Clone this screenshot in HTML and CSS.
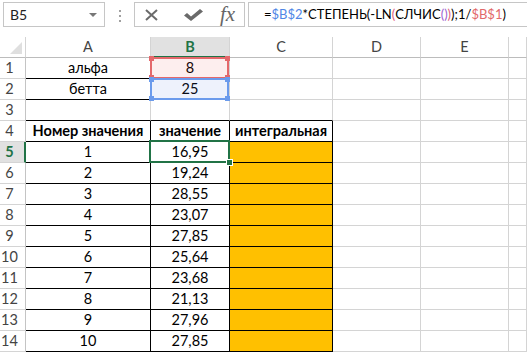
FILE: index.html
```html
<!DOCTYPE html>
<html lang="ru">
<head>
    <meta charset="UTF-8">
    <title>Книга1 - Excel</title>
    <link rel="stylesheet" href="styles.css">
</head>
<body>
    <div class="formula-bar">
        <div class="name-box"><span>B5</span><span class="arrow"></span></div>
        <div class="grip"><i></i><i></i><i></i></div>
        <div class="fx-buttons">
            <svg class="ico-cancel" width="13" height="12" viewBox="0 0 13 12">
                <path d="M1 1 L12 11 M12 1 L1 11" stroke="#6a6a6a" stroke-width="2" fill="none"/>
            </svg>
            <svg class="ico-enter" width="20" height="12" viewBox="0 0 20 12">
                <path d="M0 6.5 L3 4 L7 7.5 L16 0 L19 2.5 L7 12 Z" fill="#6a6a6a"/>
            </svg>
            <span class="fx">fx</span>
        </div>
        <div class="formula">=<span class="ref-b">$B$2</span>*СТЕПЕНЬ(-LN<span class="p1">(</span>СЛЧИС<span class="p2">()</span><span class="p1">)</span>);1/<span class="ref-r">$B$1</span>)</div>
    </div>

    <div class="sheet">
        <!-- column headers -->
        <div class="h corner"><span class="tri"></span></div>
        <div class="h">A</div>
        <div class="h h-sel">B</div>
        <div class="h">C</div>
        <div class="h">D</div>
        <div class="h">E</div>
        <div class="h"></div>

        <div class="r">1</div>
        <div class="c bb">альфа</div>
        <div class="c ref">8<span class="ref-box red"><i class="tl"></i><i class="tr"></i><i class="bl"></i><i class="br-h"></i></span></div>
        <div class="c"></div><div class="c"></div><div class="c"></div><div class="c"></div>

        <div class="r">2</div>
        <div class="c bb">бетта</div>
        <div class="c ref">25<span class="ref-box blue"><i class="tl"></i><i class="tr"></i><i class="bl"></i><i class="br-h"></i></span></div>
        <div class="c"></div><div class="c"></div><div class="c"></div><div class="c"></div>

        <div class="r">3</div>
        <div class="c bb"></div><div class="c bb"></div><div class="c bb"></div>
        <div class="c"></div><div class="c"></div><div class="c"></div>

        <div class="r">4</div>
        <div class="c t bold">Номер значения</div>
        <div class="c t bold">значение</div>
        <div class="c t bold">интегральная</div>
        <div class="c"></div><div class="c"></div><div class="c"></div>

        <div class="r r-sel">5</div>
        <div class="c t">1</div>
        <div class="c t sel">16,95<span class="sel-box"><i></i></span></div>
        <div class="c t fill"></div>
        <div class="c"></div><div class="c"></div><div class="c"></div>

        <div class="r">6</div>
        <div class="c t">2</div><div class="c t">19,24</div><div class="c t fill"></div>
        <div class="c"></div><div class="c"></div><div class="c"></div>

        <div class="r">7</div>
        <div class="c t">3</div><div class="c t">28,55</div><div class="c t fill"></div>
        <div class="c"></div><div class="c"></div><div class="c"></div>

        <div class="r">8</div>
        <div class="c t">4</div><div class="c t">23,07</div><div class="c t fill"></div>
        <div class="c"></div><div class="c"></div><div class="c"></div>

        <div class="r">9</div>
        <div class="c t">5</div><div class="c t">27,85</div><div class="c t fill"></div>
        <div class="c"></div><div class="c"></div><div class="c"></div>

        <div class="r">10</div>
        <div class="c t">6</div><div class="c t">25,64</div><div class="c t fill"></div>
        <div class="c"></div><div class="c"></div><div class="c"></div>

        <div class="r">11</div>
        <div class="c t">7</div><div class="c t">23,68</div><div class="c t fill"></div>
        <div class="c"></div><div class="c"></div><div class="c"></div>

        <div class="r">12</div>
        <div class="c t">8</div><div class="c t">21,13</div><div class="c t fill"></div>
        <div class="c"></div><div class="c"></div><div class="c"></div>

        <div class="r">13</div>
        <div class="c t">9</div><div class="c t">27,96</div><div class="c t fill"></div>
        <div class="c"></div><div class="c"></div><div class="c"></div>

        <div class="r">14</div>
        <div class="c t">10</div><div class="c t">27,85</div><div class="c t fill"></div>
        <div class="c"></div><div class="c"></div><div class="c"></div>
    </div>
</body>
</html>
```

FILE: styles.css
```css
* {
    margin: 0;
    padding: 0;
    box-sizing: border-box;
}

body {
    font-family: Lato, 'Open Sans', sans-serif;
    background-color: #fff;
    color: #000;
    width: 527px;
    height: 352px;
    overflow: hidden;
}

/* formula bar */

.formula-bar {
    display: flex;
    align-items: flex-start;
    height: 37px;
    padding: 2px 0 0 3px;
}

.name-box {
    width: 102px;
    height: 25px;
    border: 1px solid #c6c6c6;
    display: flex;
    align-items: center;
    justify-content: space-between;
    padding: 0 7px 0 6px;
    font-size: 14px;
    color: #222;
}

.name-box .arrow {
    border-left: 4px solid transparent;
    border-right: 4px solid transparent;
    border-top: 4px solid #777;
}

.grip {
    display: flex;
    flex-direction: column;
    gap: 3px;
    margin: 8px 0 0 14px;
}

.grip i {
    width: 2px;
    height: 2px;
    background-color: #a0a0a0;
}

.fx-buttons {
    display: flex;
    align-items: center;
    width: 111px;
    height: 25px;
    margin-left: 13px;
    border: 1px solid #c6c6c6;
    padding-left: 10px;
}

.ico-enter {
    margin-left: 26px;
}

.fx {
    margin-left: 16px;
    font-family: 'Liberation Serif', serif;
    font-style: italic;
    font-size: 21px;
    color: #666;
    line-height: 1;
}

.formula {
    flex: 1;
    height: 25px;
    margin-left: 3px;
    border: 1px solid #c6c6c6;
    border-right: none;
    padding-left: 15px;
    font-size: 13px;
    line-height: 23px;
    white-space: nowrap;
}

.ref-b { color: #4f86e6; }
.ref-r { color: #e2686a; }
.p1 { color: #e0607e; }
.p2 { color: #9d5fd0; }

/* sheet */

.sheet {
    display: grid;
    grid-template-columns: 26px 125px 79px 103px 88px 88px 1fr;
    grid-auto-rows: 21px;
    font-size: 14.5px;
}

.h, .r, .c {
    border-right: 1px solid #d4d4d4;
    border-bottom: 1px solid #d4d4d4;
    display: flex;
    align-items: flex-end;
    justify-content: center;
    white-space: nowrap;
    line-height: 17px;
    padding-bottom: 2px;
}

.h {
    color: #444;
    border-bottom-color: #bcbcbc;
}

.h-sel {
    background-color: #e1e1e1;
    color: #217346;
    font-weight: bold;
    border-bottom: 2px solid #217346;
    padding-bottom: 1px;
}

.corner {
    position: relative;
}

.tri {
    position: absolute;
    right: 3px;
    bottom: 3px;
    border-left: 12px solid transparent;
    border-bottom: 12px solid #dfdfdf;
}

.r {
    color: #444;
    border-right-color: #c4c4c4;
    padding-right: 6px;
}

.r-sel {
    background-color: #e1e1e1;
    color: #217346;
    font-weight: bold;
    border-right: 2px solid #217346;
    padding-right: 5px;
}

.bb { border-bottom-color: #000; }

.t {
    border-right-color: #000;
    border-bottom-color: #000;
}

.bold { font-weight: bold; }

.fill { background-color: #ffc000; }

/* range highlights */

.ref, .sel {
    position: relative;
}

.ref-box {
    position: absolute;
    left: -1px;
    top: -1px;
    right: 0;
    bottom: -1px;
    border: 2px solid;
}

.ref-box.red {
    border-color: #e4686b;
    background-color: rgba(234, 90, 90, 0.1);
}

.ref-box.blue {
    border-color: #6b9bec;
    background-color: rgba(90, 130, 230, 0.1);
}

.ref-box i {
    position: absolute;
    width: 5px;
    height: 5px;
}

.ref-box.red i { background-color: #e4686b; }
.ref-box.blue i { background-color: #6b9bec; }

.ref-box .tl { left: -3px; top: -3px; }
.ref-box .tr { right: -3px; top: -3px; }
.ref-box .bl { left: -3px; bottom: -3px; }
.ref-box .br-h { right: -3px; bottom: -3px; }

.sel-box {
    position: absolute;
    left: -2px;
    top: -2px;
    right: -1px;
    bottom: -1px;
    border: 2px solid #217346;
}

.sel-box i {
    position: absolute;
    right: -5px;
    bottom: -5px;
    width: 7px;
    height: 7px;
    background-color: #217346;
    border: 1px solid #fff;
}
```
